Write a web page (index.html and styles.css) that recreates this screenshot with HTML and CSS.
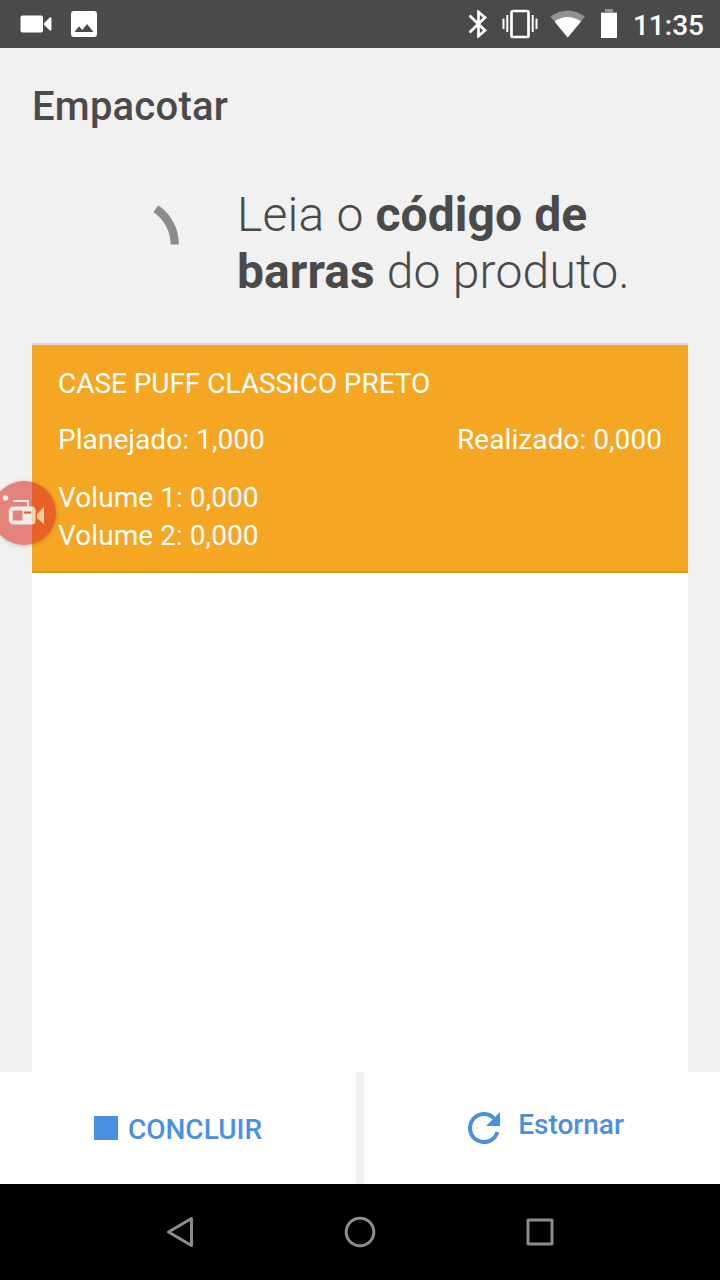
FILE: index.html
```
<!DOCTYPE html>
<html lang="pt-BR">
<head>
  <meta charset="UTF-8" />
  <title>Empacotar</title>
  <link rel="stylesheet" href="styles.css">
</head>
<body>
  <div class="status-bar">
    <div class="status-left">
      <svg width="32" height="18" viewBox="0 0 32 18" fill="#fff">
        <rect x="0.5" y="0.5" width="22.5" height="17" rx="2" />
        <path d="M24 8.300L29.500 2.700Q31.500 1.500 31.500 4V14Q31.500 16.500 29.500 15.300L24 9.700Z" />
      </svg>
      <svg width="26" height="26" viewBox="0 0 26 26">
        <rect width="26" height="26" rx="3" fill="#fff" />
        <path d="M3.500 21L8 15.200L11.300 19L16 13L22.500 21Z" fill="#4a4a4a" />
      </svg>
    </div>
    <div class="status-right">
      <svg class="bluetooth" width="19" height="28" viewBox="0 0 19 28" fill="none" stroke="#fff" stroke-width="2.700">
        <path d="M0.500 5.500L16 20.500L9.500 26V2L16 7.500L0.500 22.500" />
      </svg>
      <svg class="vibrate" width="36" height="30" viewBox="0 0 36 30" fill="none" stroke="#fff">
        <rect x="9.500" y="2" width="17" height="26" rx="1.500" stroke-width="2.700" />
        <path d="M1.500 9.500V20M5.300 6V23M30.700 6V23M34.500 9.500V20" stroke-width="2" />
      </svg>
      <svg class="wifi" width="36" height="28" viewBox="0 0 36 28">
        <path d="M0.500 6.500Q17.500 -5.500 35 6.500L17.700 27.500Z" fill="#929292" />
        <path d="M4.500 11.500Q17.500 2.500 31 11.500L17.700 27.500Z" fill="#fff" />
      </svg>
      <svg class="battery" width="16" height="29" viewBox="0 0 16 29">
        <path d="M4 0H12V3H16V6H0V3H4Z" fill="#929292" />
        <rect y="4" width="16" height="25" fill="#fff" />
      </svg>
      <span class="clock">11:35</span>
    </div>
  </div>

  <h1>Empacotar</h1>

  <div class="prompt">
    <svg class="spinner" width="96" height="96" viewBox="0 0 96 96" fill="none" stroke="#8c8c8c" stroke-width="8.300">
      <path d="M71.800 12.800A42.500 42.500 0 0 1 90.700 48.500" />
    </svg>
    <p>Leia o <b>código de<br>barras</b> do produto.</p>
  </div>

  <div class="list">
    <div class="item">
      <div class="item-name">CASE PUFF CLASSICO PRETO</div>
      <div class="item-amounts">
        <span>Planejado: 1,000</span>
        <span>Realizado: 0,000</span>
      </div>
      <div>Volume 1: 0,000</div>
      <div>Volume 2: 0,000</div>
    </div>
  </div>

  <div class="actions">
    <div class="action finish">
      <span class="square"></span>
      <span>CONCLUIR</span>
    </div>
    <div class="action revert">
      <svg width="32" height="32" viewBox="0 0 32 32">
        <path d="M25.900 6.100A14 14 0 1 0 29.400 20" fill="none" stroke="#4a90e2" stroke-width="4" />
        <path d="M32 0V14H18Z" fill="#4a90e2" />
      </svg>
      <span>Estornar</span>
    </div>
  </div>

  <div class="nav-bar">
    <svg width="32" height="32" viewBox="0 0 32 32"><path d="M27.500 2.500V29.500L4.500 16Z" /></svg>
    <svg width="32" height="32" viewBox="0 0 32 32"><circle cx="16" cy="16" r="13.800" /></svg>
    <svg width="32" height="32" viewBox="0 0 32 32"><rect x="4" y="4" width="24" height="24" rx="0.500" /></svg>
  </div>

  <!-- floating screen recorder button -->
  <div class="recorder">
    <svg width="64" height="64" viewBox="0 0 64 64">
      <g fill="none" stroke="#eeebeb">
        <circle cx="13.500" cy="17" r="2" stroke-width="1.500" fill="#eeebeb" />
        <path d="M21 20H36V26" stroke-width="2" />
        <rect x="18.800" y="27.500" width="22.500" height="14" rx="2.500" stroke-width="4" />
      </g>
      <path d="M30.500 27H40V42H30.500Z" fill="#eeebeb" />
      <path d="M40 25.500Q43.400 25.500 43.400 29V40Q43.400 43.500 40 43.500Z" fill="#f0d3a5" />
      <path d="M32 31.500H39" stroke="#e0544a" stroke-width="2" />
      <path d="M45 33L52 26V43L45 37Z" fill="#f0cf98" />
    </svg>
  </div>
</body>
</html>
```
FILE: styles.css
```
body {
  margin: 0;
  font-family: Roboto, sans-serif;
  background-color: #f1f1f1;
  color: #4a4a4a;
  display: flex;
  flex-direction: column;
  height: 1280px;
  position: relative;
  overflow: hidden;
}
svg {
  display: block;
  flex-shrink: 0;
}
.status-bar {
  height: 48px;
  box-sizing: border-box;
  padding: 0 16px 0 20px;
  background-color: #4a4a4a;
  color: white;
  display: flex;
  justify-content: space-between;
  align-items: center;
}
.status-left, .status-right {
  display: flex;
  align-items: center;
}
.status-left {
  gap: 19px;
}
.vibrate {
  margin-left: 14px;
}
.wifi {
  margin-left: 12px;
}
.battery {
  margin-left: 15px;
  margin-top: -1px;
}
.clock {
  margin-left: 16px;
  padding-top: 2px;
  font-size: 28px;
  font-weight: 500;
}
h1 {
  margin: 35px 32px 0;
  font-size: 40px;
  line-height: 48px;
  font-weight: 500;
  letter-spacing: 0.22px;
}
.prompt {
  display: flex;
  gap: 57px;
  margin-top: 55px;
  padding-left: 84px;
  height: 157px;
}
.spinner {
  margin-top: 10px;
}
.prompt p {
  margin: 0;
  font-size: 48px;
  line-height: 57px;
  font-weight: 300;
  letter-spacing: 0.22px;
  white-space: nowrap;
}
.prompt b {
  font-weight: 700;
  letter-spacing: 0.06px;
}
.list {
  flex: 1;
  margin: 0 32px;
  background-color: white;
  border-top: 2px solid #dedae0;
}
.item {
  padding: 20px 26px 16px;
  background-color: #f5a623;
  border-bottom: 2px solid #dc951f;
  color: white;
  font-size: 28px;
  line-height: 38px;
  letter-spacing: 0.06px;
}
.item-name {
  letter-spacing: -0.05px;
}
.item-amounts {
  display: flex;
  justify-content: space-between;
  margin: 18px 0 20px;
}
.actions {
  display: grid;
  grid-template-columns: 1fr 1fr;
  gap: 8px;
  height: 112px;
}
.action {
  display: flex;
  align-items: center;
  justify-content: center;
  background-color: white;
  color: #4a90e2;
  font-size: 28px;
  line-height: 32px;
  font-weight: 500;
}
.finish {
  gap: 10px;
}
.finish span:last-child {
  padding-top: 4px;
}
.square {
  width: 24px;
  height: 24px;
  background-color: #4a90e2;
}
.revert {
  gap: 18px;
  padding-left: 8px;
}
.revert span {
  padding-bottom: 6px;
}
.nav-bar {
  height: 96px;
  display: flex;
  align-items: center;
  justify-content: center;
  gap: 148px;
  background-color: black;
}
.nav-bar svg {
  fill: none;
  stroke: #8c8c8c;
  stroke-width: 3;
  stroke-linejoin: round;
}
.recorder {
  position: absolute;
  left: -8px;
  top: 481px;
  width: 64px;
  height: 64px;
  border-radius: 50%;
  background-color: rgba(220, 50, 40, 0.58);
  box-shadow: 0 1px 4px rgba(0, 0, 0, 0.2);
}
```
